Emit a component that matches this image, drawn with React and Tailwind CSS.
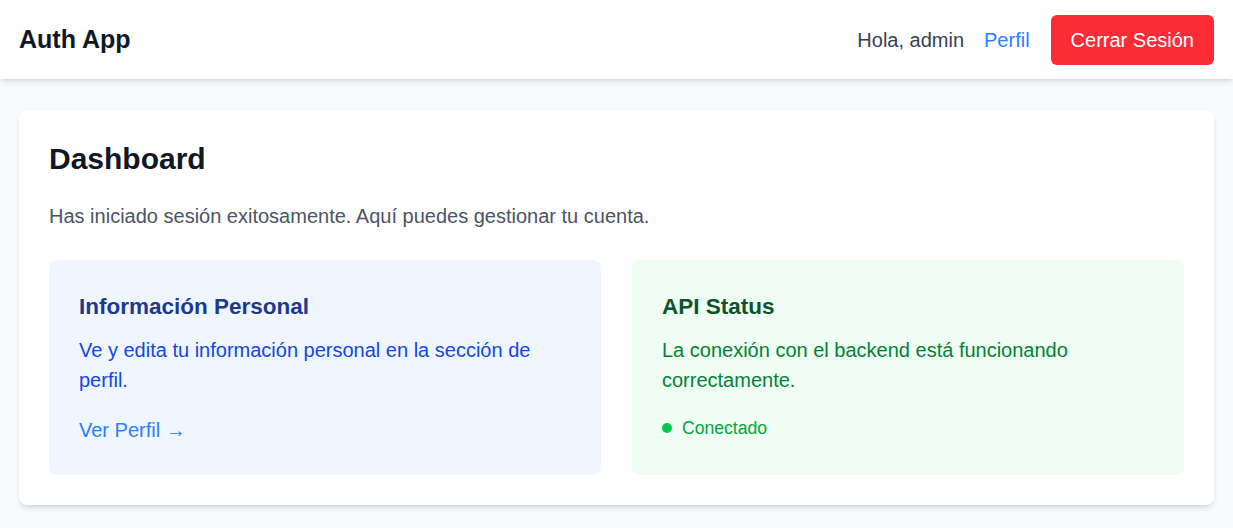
import React from 'react';

const Header = () => (
  <header className="bg-white shadow-md">
    <div className="flex h-[79px] items-center justify-between px-[19px]">
      <h1 className="text-[25px] font-bold leading-normal text-gray-900">Auth App</h1>
      <div className="flex items-center gap-5 text-xl leading-normal">
        <span className="text-gray-700">Hola, admin</span>
        <a href="#" className="text-blue-500">Perfil</a>
        <button className="ml-px rounded-md bg-red-500 px-5 py-2.5 text-xl leading-normal text-white">
          Cerrar Sesión
        </button>
      </div>
    </div>
  </header>
);

const Dashboard = () => (
  <div className="min-h-screen bg-gray-50" style={{ fontFamily: '"Liberation Sans", Arial, sans-serif' }}>
    <Header />
    <main className="px-[19px] pt-8 pb-6">
      <div className="rounded-lg bg-white p-[30px] shadow-md">
        <h2 className="mb-6 text-3xl font-bold text-gray-900">Dashboard</h2>
        <p className="mb-[29px] text-xl leading-normal text-gray-600">
          Has iniciado sesión exitosamente. Aquí puedes gestionar tu cuenta.
        </p>

        <div className="grid grid-cols-2 gap-[31px]">
          {/* Personal info card */}
          <div className="rounded-lg bg-blue-50 p-[30px]">
            <h3 className="mb-3 text-[22.5px] font-bold leading-[33px] text-blue-900">Información Personal</h3>
            <p className="text-xl leading-normal text-blue-700">
              Ve y edita tu información personal en la sección de perfil.
            </p>
            <a href="#" className="mt-5 inline-block text-xl leading-normal text-blue-500">Ver Perfil →</a>
          </div>

          {/* API status card */}
          <div className="rounded-lg bg-green-50 p-[30px]">
            <h3 className="mb-3 text-[22.5px] font-bold leading-[33px] text-green-900">API Status</h3>
            <p className="text-xl leading-normal text-green-700">
              La conexión con el backend está funcionando correctamente.
            </p>
            <div className="mt-5 flex items-center gap-2.5">
              <span className="h-2.5 w-2.5 rounded-full bg-green-500"></span>
              <span className="text-[17.6px] leading-normal text-green-600">Conectado</span>
            </div>
          </div>
        </div>
      </div>
    </main>
  </div>
);

export default function App() {
  return <Dashboard />;
}
